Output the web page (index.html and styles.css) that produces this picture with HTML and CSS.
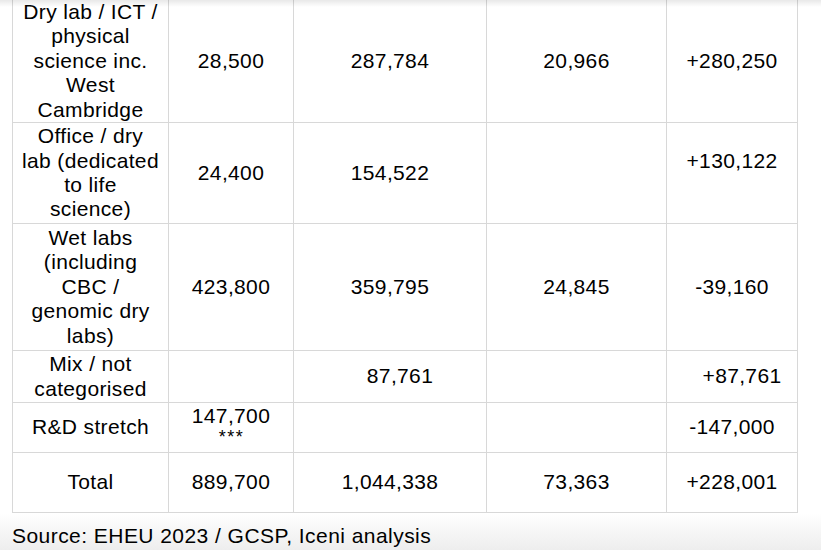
FILE: index.html
```html
<!DOCTYPE html>
<html lang="en">
<head>
<meta charset="utf-8">
<title>Floorspace table</title>
<link rel="stylesheet" href="styles.css">
</head>
<body>
<div class="sheet">
  <table class="grid">
    <colgroup>
      <col class="c1"><col class="c2"><col class="c3"><col class="c4"><col class="c5">
    </colgroup>
    <tbody>
      <tr class="r1">
        <td>Dry lab / ICT /<br>physical<br>science inc.<br>West<br>Cambridge</td>
        <td>28,500</td>
        <td>287,784</td>
        <td>20,966</td>
        <td>+280,250</td>
      </tr>
      <tr class="r2">
        <td>Office / dry<br>lab (dedicated<br>to life<br>science)</td>
        <td>24,400</td>
        <td>154,522</td>
        <td></td>
        <td class="lift">+130,122</td>
      </tr>
      <tr class="r3">
        <td>Wet labs<br>(including<br>CBC /<br>genomic dry<br>labs)</td>
        <td>423,800</td>
        <td>359,795</td>
        <td>24,845</td>
        <td>-39,160</td>
      </tr>
      <tr class="r4">
        <td>Mix / not<br>categorised</td>
        <td></td>
        <td class="nudge">87,761</td>
        <td></td>
        <td class="nudge">+87,761</td>
      </tr>
      <tr class="r5">
        <td>R&amp;D stretch</td>
        <td class="stacked"><span class="val">147,700</span><span class="note">***</span></td>
        <td></td>
        <td></td>
        <td>-147,000</td>
      </tr>
      <tr class="r6">
        <td>Total</td>
        <td>889,700</td>
        <td>1,044,338</td>
        <td>73,363</td>
        <td>+228,001</td>
      </tr>
    </tbody>
  </table>
</div>
<div class="source">Source: EHEU 2023 / GCSP, Iceni analysis</div>
</body>
</html>
```

FILE: styles.css
```css
html, body {
  margin: 0;
  padding: 0;
  background: #ffffff;
}

body {
  font-family: "Liberation Sans", Arial, Helvetica, sans-serif;
  font-size: 21px;
  letter-spacing: 0.35px;
  line-height: 24.4px;
  color: #000000;
  overflow: hidden;
}

.sheet {
  position: relative;
  overflow: hidden;
}

.sheet::before {
  content: "";
  position: absolute;
  top: 0;
  left: 0;
  right: 0;
  height: 7px;
  background: linear-gradient(rgba(0, 0, 0, 0.09), rgba(0, 0, 0, 0));
  pointer-events: none;
  z-index: 1;
}

.grid {
  border-collapse: collapse;
  table-layout: fixed;
  margin: -1px 0 0 12px;
  width: 786px;
}

.c1 { width: 156px; }
.c2 { width: 125px; }
.c3 { width: 193px; }
.c4 { width: 180px; }
.c5 { width: 131px; }

.grid td {
  border: 1px solid #d8d8d8;
  padding: 0 6px;
  text-align: center;
  vertical-align: middle;
  white-space: nowrap;
}

.r1 td { height: 122px; }
.r2 td { height: 100px; }
.r3 td { height: 126px; }
.r4 td { height: 51px; }
.r5 td { height: 49px; }
.r6 td { height: 59px; }

.r2 td.lift {
  height: 76px;
  padding-bottom: 24px;
}

.r4 td.nudge {
  padding-left: 26px;
}

.r5 td.stacked {
  vertical-align: top;
  padding-top: 1px;
  height: 48px;
}

.stacked .val,
.stacked .note {
  display: block;
}

.stacked .note {
  font-size: 18px;
  line-height: 18px;
  letter-spacing: 1.5px;
  padding-left: 1px;
}

.source {
  padding: 11px 12px 12px;
  letter-spacing: 0.45px;
  background: linear-gradient(#ffffff, #ececec 40px);
}
```
